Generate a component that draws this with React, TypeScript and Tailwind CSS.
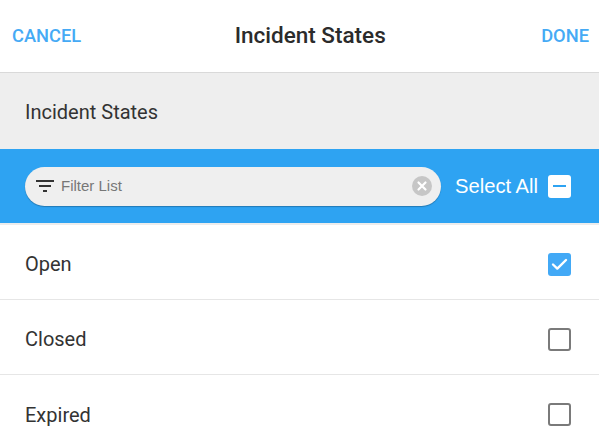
import { useState } from "react";

const states = ["Open", "Closed", "Expired"];

function FilterIcon() {
  return (
    <svg width="18" height="14" viewBox="0 0 18 14" className="shrink-0">
      <rect x="0" y="1" width="18" height="2" fill="#333" />
      <rect x="3" y="6" width="12" height="2" fill="#333" />
      <rect x="7" y="11" width="4" height="2" fill="#333" />
    </svg>
  );
}

function ClearIcon() {
  return (
    <svg width="20" height="20" viewBox="0 0 20 20" className="shrink-0">
      <circle cx="10" cy="10" r="10" fill="#c6c6c6" />
      <path d="M6.5 6.5 L13.5 13.5 M13.5 6.5 L6.5 13.5" stroke="#fff" strokeWidth="2.2" strokeLinecap="round" />
    </svg>
  );
}

function Checkbox({ checked }: { checked: boolean }) {
  if (checked) {
    return (
      <div className="w-[23px] h-[23px] rounded-[3px] bg-[#42a9f6] flex items-center justify-center">
        <svg width="17" height="13" viewBox="0 0 17 13">
          <path d="M2 6.5 L6.3 10.6 L15 2" stroke="#fff" strokeWidth="2.4" fill="none" strokeLinecap="round" strokeLinejoin="round" />
        </svg>
      </div>
    );
  }
  return <div className="w-[23px] h-[23px] rounded-[3px] border-2 border-[#7a7a7a] bg-white" />;
}

export default function App() {
  const [selected, setSelected] = useState<string[]>(["Open"]);

  const toggle = (s: string) =>
    setSelected((cur) => (cur.includes(s) ? cur.filter((x) => x !== s) : [...cur, s]));

  return (
    <div className="w-[599px] h-[448px] overflow-hidden bg-white font-['Roboto',sans-serif]">
      {/* header */}
      <div className="h-[73px] border-b border-[#d9d9d9] flex items-center justify-between px-3">
        <button type="button" className="text-[18.3px] font-medium text-[#45aaf5]">
          CANCEL
        </button>
        <span className="text-[22.5px] font-medium text-[#2b2b2b] pr-[2px]">Incident States</span>
        <button type="button" className="text-[18.3px] font-medium text-[#45aaf5] -mr-[2px]">
          DONE
        </button>
      </div>

      {/* section title */}
      <div className="h-[76px] bg-[#eeeeee] flex items-center px-[25px] pt-[2px]">
        <span className="text-[20px] text-[#333]">Incident States</span>
      </div>

      {/* filter bar */}
      <div className="h-[74px] bg-[#2ea3f2] flex items-center pl-[25px] pr-[28px]">
        <div className="w-[416px] h-[39px] rounded-full bg-[#efefef] shadow-[0_1px_1px_rgba(0,0,0,0.25)] flex items-center pl-[11px] pr-[9px] gap-[7px]">
          <FilterIcon />
          <span className="flex-1 text-[15px] text-[#777] font-['Liberation_Sans',Arial,sans-serif]">
            Filter List
          </span>
          <ClearIcon />
        </div>
        <span className="ml-[14px] text-[20.2px] text-white font-['Liberation_Sans',Arial,sans-serif]">
          Select All
        </span>
        <div className="ml-auto w-[23px] h-[23px] rounded-[3px] bg-white flex items-center justify-center">
          <div className="w-[13px] h-[2px] bg-[#2ea3f2]" />
        </div>
      </div>
      <div className="h-[2px] bg-[#ececec]" />

      {/* list */}
      <div>
        {states.map((s, i) => (
          <div
            key={s}
            onClick={() => toggle(s)}
            className={`h-[75px] flex items-center justify-between pl-[25px] pr-[28px] pt-[4px] ${
              i < states.length - 1 ? "border-b border-[#e6e6e6]" : ""
            }`}
          >
            <span className="text-[20px] text-[#333]">{s}</span>
            <Checkbox checked={selected.includes(s)} />
          </div>
        ))}
      </div>
    </div>
  );
}
